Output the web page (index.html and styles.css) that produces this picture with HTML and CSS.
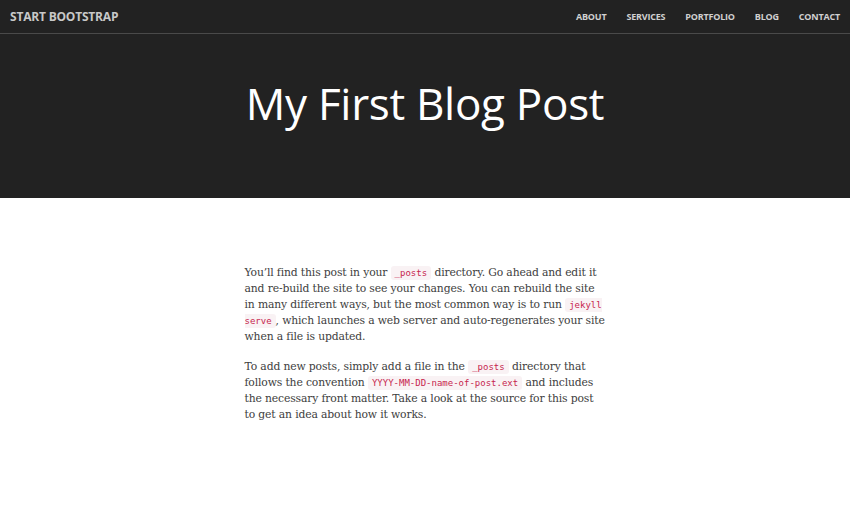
FILE: index.html
```html
<!DOCTYPE html>
<html>
<head>
<meta charset="utf-8">
<link rel="stylesheet" href="styles.css">
</head>
<body>
<header class="masthead">
  <nav class="navbar">
    <a class="brand" href="#">Start Bootstrap</a>
    <ul class="nav-links">
      <li><a href="#">About</a></li>
      <li><a href="#">Services</a></li>
      <li><a href="#">Portfolio</a></li>
      <li><a href="#">Blog</a></li>
      <li><a href="#">Contact</a></li>
    </ul>
  </nav>
  <div class="hero">
    <h1>My First Blog Post</h1>
  </div>
</header>
<main class="post">
  <p>You’ll find this post in your <code>_posts</code> directory. Go ahead and edit it and re-build the site to see your changes. You can rebuild the site in many different ways, but the most common way is to run <code>jekyll serve</code>, which launches a web server and auto-regenerates your site when a file is updated.</p>
  <p>To add new posts, simply add a file in the <code>_posts</code> directory that follows the convention <code>YYYY-MM-DD-name-of-post.ext</code> and includes the necessary front matter. Take a look at the source for this post to get an idea about how it works.</p>
</main>
</body>
</html>
```
FILE: styles.css
```css
html, body {
  margin: 0;
  padding: 0;
  background: #fff;
}
body {
  font-family: "DejaVu Serif", "Liberation Serif", serif;
}
.masthead {
  background: #222222;
  height: 198px;
}
.navbar {
  height: 33px;
  border-bottom: 1px solid #4a4a4a;
  display: flex;
  align-items: center;
  justify-content: space-between;
  padding: 0 10px;
  font-family: "Open Sans", sans-serif;
  font-weight: 700;
  text-transform: uppercase;
  line-height: 1;
}
.brand {
  color: #c8c8c8;
  text-decoration: none;
  font-size: 12px;
  letter-spacing: -0.2px;
}
.nav-links {
  display: flex;
  align-items: center;
  list-style: none;
  margin: 0;
  padding: 0;
  gap: 20px;
  font-size: 9px;
}
.nav-links a {
  color: #d0d0d0;
  text-decoration: none;
  font-size: 9px;
  letter-spacing: -0.2px;
}
.hero {
  display: flex;
  justify-content: center;
  padding-top: 39px;
}
.hero h1 {
  margin: 0;
  color: #fff;
  font-family: "Open Sans", sans-serif;
  font-weight: 400;
  font-size: 44px;
  line-height: 60px;
  letter-spacing: -0.3px;
}
.post {
  width: 361px;
  margin: 0 auto;
  padding-top: 67px;
  color: #404040;
  font-size: 10.8px;
  line-height: 16px;
  letter-spacing: -0.15px;
}
.post p {
  margin: 0 0 14px;
}
code {
  font-family: "DejaVu Sans Mono", "Liberation Mono", monospace;
  font-size: 9px;
  letter-spacing: 0;
  color: #c7254e;
  background: #f9f2f4;
  padding: 2px 4px;
  border-radius: 3px;
}
```
